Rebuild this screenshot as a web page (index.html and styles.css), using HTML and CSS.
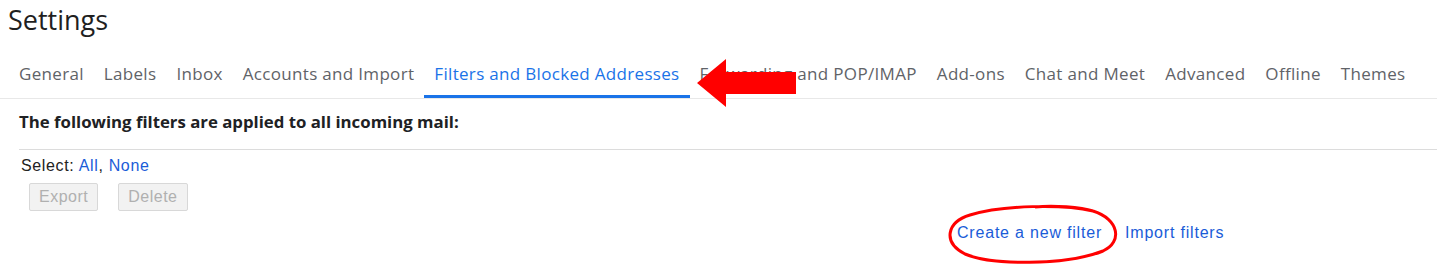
FILE: index.html
```html
<!DOCTYPE html>
<html>
<head>
<meta charset="utf-8">
<link rel="stylesheet" href="styles.css">
</head>
<body>
<div class="page">
  <h1 class="title">Settings</h1>
  <nav class="tabs">
    <span class="tab">General</span>
    <span class="tab">Labels</span>
    <span class="tab">Inbox</span>
    <span class="tab">Accounts and Import</span>
    <span class="tab active">Filters and Blocked Addresses</span>
    <span class="tab">Forwarding and POP/IMAP</span>
    <span class="tab">Add-ons</span>
    <span class="tab">Chat and Meet</span>
    <span class="tab">Advanced</span>
    <span class="tab">Offline</span>
    <span class="tab">Themes</span>
  </nav>
  <section class="content">
    <div class="heading">The following filters are applied to all incoming mail:</div>
    <div class="select">Select: <a class="link">All</a>, <a class="link">None</a></div>
    <div class="buttons">
      <button class="btn">Export</button>
      <button class="btn">Delete</button>
    </div>
    <div class="actions">
      <a class="link action">Create a new filter</a>
      <a class="link action">Import filters</a>
    </div>
  </section>
  <svg class="arrow" width="110" height="60" viewBox="0 0 110 60"><polygon points="0,24 29,0 29,13 99,13 99,35 29,35 29,48" fill="#ff0000"/></svg>
  <svg class="circle" width="180" height="66" viewBox="0 0 180 66"><path d="M150 9 C 120 2, 60 3, 27 13 C 4 20, -1 40, 22 52 C 48 63, 122 64, 160 49 C 180 40, 176 17, 150 9 C 138 5, 110 3, 92 5" fill="none" stroke="#ff0000" stroke-width="3"/></svg>
</div>
</body>
</html>
```

FILE: styles.css
```css
html, body {
  margin: 0;
  padding: 0;
  background: #ffffff;
}
.page {
  position: relative;
  font-family: "Open Sans", Roboto, sans-serif;
  color: #202124;
  height: 267px;
  overflow: hidden;
}
.title {
  margin: 0;
  padding: 4px 0 0 8px;
  height: 38px;
  font-size: 27px;
  font-weight: 400;
  line-height: 32px;
  color: #1f1f1f;
}
.tabs {
  display: flex;
  padding: 14px 0 0 9px;
  border-bottom: 1px solid #e8e8e8;
  height: 42px;
  box-sizing: content-box;
}
.tab {
  padding: 0 10px;
  font-size: 17px;
  letter-spacing: 0.32px;
  line-height: 36px;
  color: #5f6368;
  white-space: nowrap;
  height: 39px;
  box-sizing: border-box;
}
.tab.active {
  color: #1a73e8;
  border-bottom: 3px solid #1a73e8;
  height: 42px;
}
.arrow {
  position: absolute;
  left: 697px;
  top: 59px;
}
.circle {
  position: absolute;
  left: 943px;
  top: 202px;
}
.content {
  padding-left: 19px;
}
.heading {
  font-weight: 700;
  font-size: 16.8px;
  line-height: 20px;
  padding: 13px 0 17px;
  border-bottom: 1px solid #dcdcdc;
  color: #202124;
}
.select {
  font-family: "Liberation Sans", Arial, sans-serif;
  font-size: 16px;
  letter-spacing: 0.65px;
  line-height: 20px;
  padding: 6px 0 0 2px;
  color: #222222;
}
.link {
  color: #1a5cd8;
  cursor: pointer;
}
.buttons {
  display: flex;
  gap: 20px;
  padding: 7px 0 0 10px;
}
.btn {
  font-family: "Liberation Sans", Arial, sans-serif;
  font-size: 16px;
  letter-spacing: 0.5px;
  color: #b0b0b0;
  background: #f2f2f2;
  border: 1px solid #d8d8d8;
  border-radius: 2px;
  height: 28px;
  padding: 0 9px;
}
.actions {
  display: flex;
  gap: 23px;
  padding: 12px 0 0 938px;
  font-family: "Liberation Sans", Arial, sans-serif;
  font-size: 16px;
  letter-spacing: 0.8px;
  line-height: 20px;
}
.action {
  color: #1a5cd8;
  white-space: nowrap;
}
```
